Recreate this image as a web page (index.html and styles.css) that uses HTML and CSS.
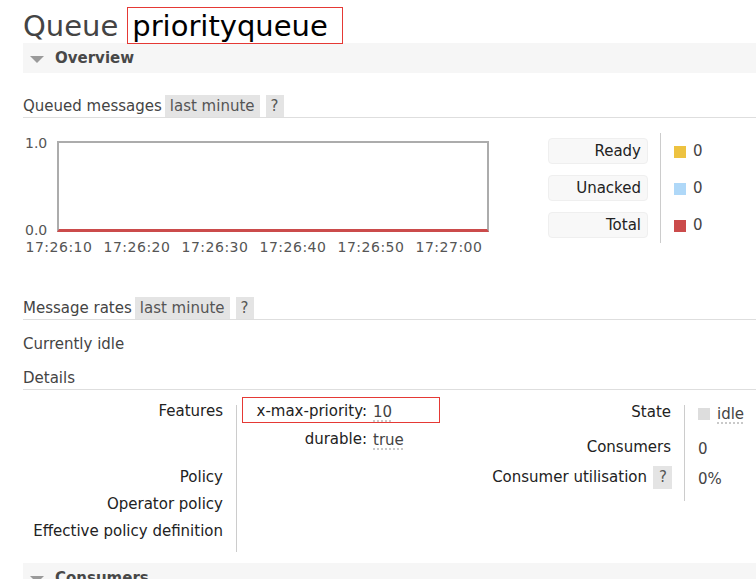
FILE: index.html
```html
<!DOCTYPE html>
<html>
<head>
<meta charset="utf-8">
<title>Queue priorityqueue</title>
<link rel="stylesheet" href="styles.css">
</head>
<body>
<div class="page">
  <h1 class="title"><span class="title-prefix">Queue</span><span class="title-name">priorityqueue</span></h1>

  <div class="section-bar"><span class="tri"></span>Overview</div>

  <div class="subhead">
    <span class="subhead-text">Queued messages</span>
    <span class="badge">last minute</span>
    <span class="badge badge-q">?</span>
  </div>

  <div class="chart-row">
    <div class="chart">
      <div class="y-axis"><span>1.0</span><span>0.0</span></div>
      <div class="plot"></div>
      <div class="x-axis">
        <span>17:26:10</span><span>17:26:20</span><span>17:26:30</span><span>17:26:40</span><span>17:26:50</span><span>17:27:00</span>
      </div>
    </div>
    <div class="legend">
      <div class="legend-labels">
        <div class="legend-label">Ready</div>
        <div class="legend-label">Unacked</div>
        <div class="legend-label">Total</div>
      </div>
      <div class="legend-values">
        <div class="legend-value"><span class="swatch swatch-ready"></span>0</div>
        <div class="legend-value"><span class="swatch swatch-unacked"></span>0</div>
        <div class="legend-value"><span class="swatch swatch-total"></span>0</div>
      </div>
    </div>
  </div>

  <div class="subhead subhead-rates">
    <span class="subhead-text">Message rates</span>
    <span class="badge">last minute</span>
    <span class="badge badge-q">?</span>
  </div>

  <p class="idle-note">Currently idle</p>

  <div class="subhead subhead-details">
    <span class="subhead-text">Details</span>
  </div>

  <div class="details-row">
    <div class="facts facts-left">
      <div class="sep sep-left"></div>
      <div class="k">Features</div>
      <div class="v v-features">
        <div class="feat-row feat-hl">
          <span class="feat-k">x-max-priority:</span><span class="feat-v"><abbr>10</abbr></span>
        </div>
        <div class="feat-row">
          <span class="feat-k">durable:</span><span class="feat-v"><abbr>true</abbr></span>
        </div>
      </div>
      <div class="k k-gap">Policy</div>
      <div class="v k-gap"></div>
      <div class="k">Operator policy</div>
      <div class="v"></div>
      <div class="k">Effective policy definition</div>
      <div class="v"></div>
    </div>

    <div class="facts facts-right">
      <div class="sep sep-right"></div>
      <div class="k">State</div>
      <div class="v"><span class="state-box"></span><abbr>idle</abbr></div>
      <div class="k">Consumers</div>
      <div class="v">0</div>
      <div class="k k-util"><span>Consumer utilisation</span><span class="badge badge-q badge-util">?</span></div>
      <div class="v">0%</div>
    </div>
  </div>

  <div class="section-bar section-consumers"><span class="tri"></span>Consumers</div>
</div>
</body>
</html>
```
FILE: styles.css
```css
* {
  box-sizing: border-box;
}

html,
body {
  margin: 0;
  padding: 0;
  background: #fff;
}

body {
  width: 756px;
  height: 579px;
  overflow: hidden;
  font-family: "DejaVu Sans", Verdana, sans-serif;
  font-size: 15px;
  color: #444;
}

.page {
  padding-left: 23px;
}

/* Title */
.title {
  display: flex;
  margin: 7px 0 -1px;
  font-size: 29px;
  font-weight: normal;
  line-height: 33px;
  color: #444;
}

.title-prefix {
  padding: 3px 9px 1px 0;
}

.title-name {
  border: 1px solid #e53935;
  padding: 2px 14px 0 4px;
  color: #000;
}

/* Collapsible section bars */
.section-bar {
  display: flex;
  align-items: center;
  height: 30px;
  padding-left: 7px;
  background: #f6f6f6;
  font-weight: bold;
  color: #484848;
}

.tri {
  width: 0;
  height: 0;
  border-left: 7px solid transparent;
  border-right: 7px solid transparent;
  border-top: 7px solid #9a9a9a;
  margin-right: 11px;
  margin-top: 2px;
}

.section-consumers {
  margin-top: 18px;
}

/* Sub headings */
.subhead {
  display: flex;
  align-items: flex-end;
  height: 23px;
  margin-top: 22px;
  border-bottom: 1px solid #dedede;
  line-height: 22px;
}

.subhead-text {
  margin-right: 3px;
}

.subhead-rates {
  margin-top: 43px;
}

.subhead-details {
  margin-top: 13px;
}

.badge {
  display: inline-block;
  height: 22px;
  padding: 0 5px;
  background: #e4e4e4;
  color: #555;
}

.badge-q {
  margin-left: 6px;
}

.idle-note {
  margin: 14px 0 0;
  line-height: 20px;
}

/* Chart */
.chart-row {
  display: flex;
  margin-top: 15px;
}

.chart {
  display: grid;
  grid-template-columns: 34px 432px;
  padding-top: 8px;
  font-size: 14px;
  line-height: 14px;
  color: #555;
}

.y-axis {
  display: flex;
  flex-direction: column;
  justify-content: space-between;
  padding-left: 2px;
  margin-top: -5px;
  margin-bottom: -5px;
}

.plot {
  height: 91px;
  border: 2px solid #acacac;
  border-bottom: 3px solid #cb4b4b;
  background: #fff;
}

.x-axis {
  grid-column: 1 / -1;
  display: flex;
  margin-top: 8px;
  margin-left: -3px;
  letter-spacing: 0.5px;
}

.x-axis span {
  width: 78px;
  text-align: center;
}

.legend {
  display: flex;
  margin-left: 59px;
}

.legend-labels {
  display: flex;
  flex-direction: column;
  gap: 11px;
  width: 100px;
  padding-top: 5px;
}

.legend-label {
  height: 26px;
  padding-right: 6px;
  border: 1px solid #efefef;
  border-radius: 4px;
  background: #f8f8f8;
  line-height: 25px;
  text-align: right;
  color: #222;
}

.legend-values {
  display: flex;
  flex-direction: column;
  gap: 11px;
  height: 110px;
  margin-left: 12px;
  padding: 5px 0 0 13px;
  border-left: 1px solid #cccccc;
}

.legend-value {
  display: flex;
  align-items: center;
  height: 26px;
}

.swatch {
  width: 12px;
  height: 12px;
  margin-right: 7px;
  margin-top: 2px;
}

.swatch-ready {
  background: #edc240;
}

.swatch-unacked {
  background: #afd8f8;
}

.swatch-total {
  background: #cb4b4b;
}

/* Details */
.details-row {
  display: flex;
  margin-top: 8px;
}

.facts {
  display: grid;
  line-height: 27px;
}

.facts-left {
  width: 427px;
  grid-template-columns: 213px 1px 213px;
}

.facts-right {
  grid-template-columns: 234px 1px auto;
  grid-template-rows: 35px 30px 27px;
  padding-top: 1px;
}

.sep {
  grid-column: 2;
  background: #cccccc;
}

.sep-left {
  grid-row: 1 / span 4;
  margin-top: 7px;
  margin-bottom: -7px;
}

.sep-right {
  grid-row: 1 / span 3;
  margin-top: 6px;
  margin-bottom: -10px;
}

.k {
  grid-column: 1;
  padding-right: 13px;
  text-align: right;
  color: #222;
  white-space: nowrap;
}

.v {
  grid-column: 3;
  padding-top: 2px;
}

.facts-left .v {
  padding-left: 5px;
}

.facts-right .v {
  padding-left: 13px;
}

.k-gap {
  margin-top: 10px;
}

.v-features {
  padding-top: 0;
}

.feat-row {
  position: relative;
  display: grid;
  grid-template-columns: 125px 67px;
  column-gap: 6px;
  width: 198px;
}

.feat-k {
  text-align: right;
  color: #222;
}

.feat-v {
  padding-top: 1px;
}

.feat-hl::after {
  content: "";
  position: absolute;
  top: -1px;
  right: 0;
  bottom: 3px;
  left: 0;
  border: 1px solid #e53935;
}

abbr {
  text-decoration: underline dotted #b8b8b8;
  text-underline-offset: 4px;
  color: #444;
}

.state-box {
  display: inline-block;
  width: 12px;
  height: 12px;
  margin-right: 7px;
  vertical-align: -1px;
  background: #dddddd;
}

.k-util {
  display: flex;
  justify-content: flex-end;
  align-items: center;
  padding-right: 12px;
}

.badge-util {
  height: 23px;
  line-height: 23px;
  padding: 0 5px 0 6px;
}
```
